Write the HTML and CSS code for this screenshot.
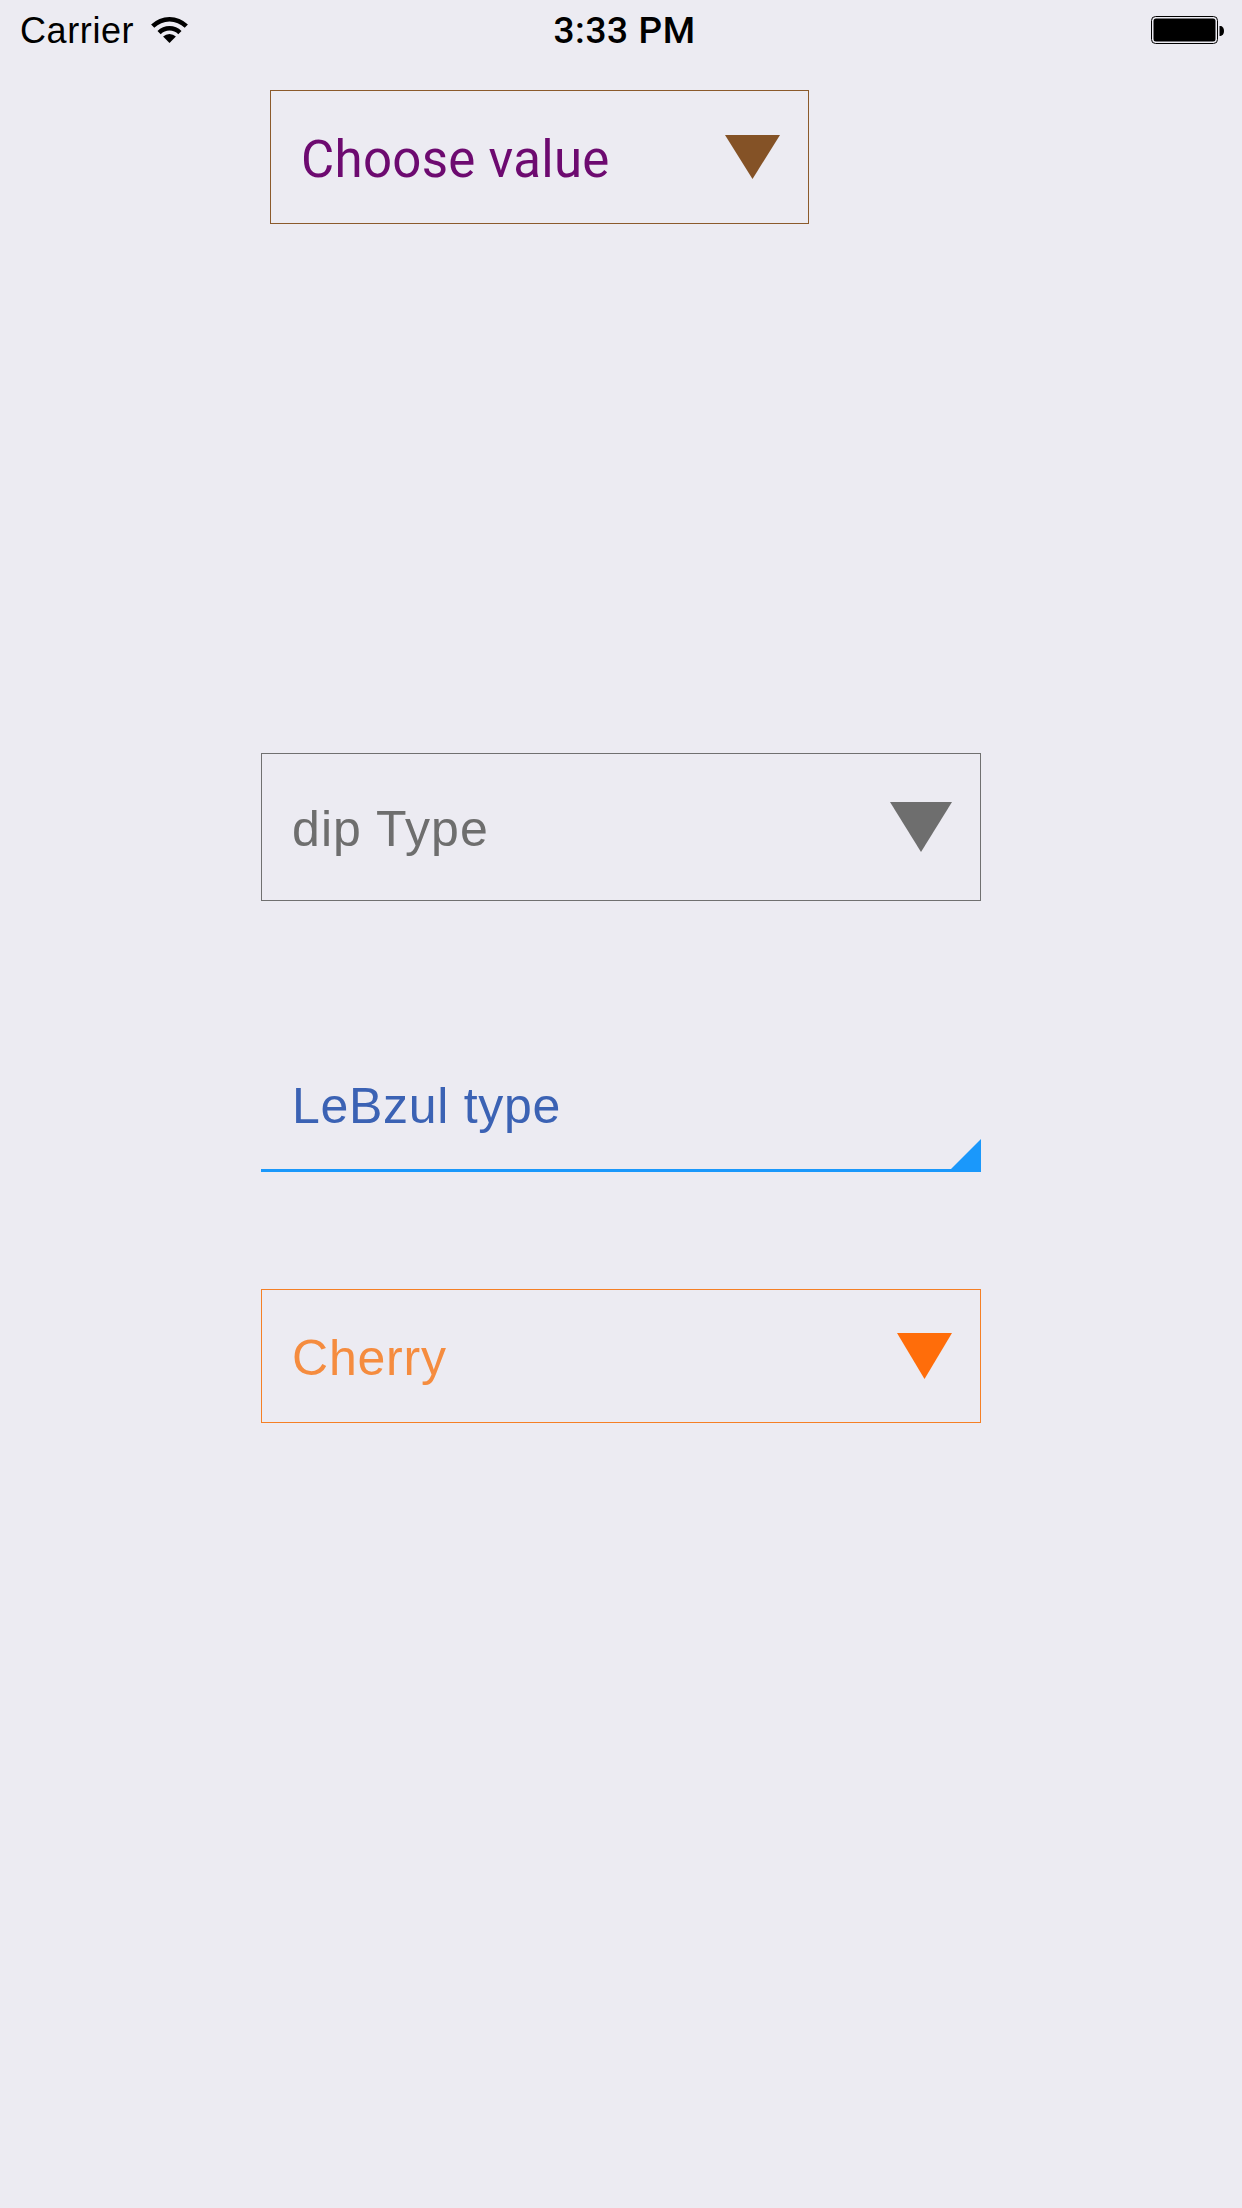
FILE: index.html
```html
<!DOCTYPE html>
<html lang="en">
<head>
<meta charset="utf-8">
<title>Dropdowns</title>
<link rel="stylesheet" href="styles.css">
</head>
<body>
<header class="status">
  <div class="status-left">
    <span class="carrier">Carrier</span>
    <svg class="wifi" width="37" height="28" viewBox="0 0 37 28" aria-hidden="true">
      <path d="M0.1 9.6 A26 26 0 0 1 36.9 9.6 L33.7 12.8 A21.5 21.5 0 0 0 3.3 12.8 Z" fill="#000"/>
      <path d="M6.5 16 A17 17 0 0 1 30.5 16 L27.3 19.2 A12.5 12.5 0 0 0 9.7 19.2 Z" fill="#000"/>
      <path d="M18.5 28 L12.1 21.6 A9 9 0 0 1 24.9 21.6 Z" fill="#000"/>
    </svg>
  </div>
  <div class="time">3:33 PM</div>
  <div class="status-right">
    <svg class="battery" width="74" height="28" viewBox="0 0 74 28" aria-hidden="true">
      <rect x="0.5" y="0.5" width="66" height="27" rx="4" ry="4" fill="none" stroke="#000" stroke-width="1"/>
      <rect x="2.5" y="2.5" width="62" height="23" rx="2.5" ry="2.5" fill="#000"/>
      <path d="M68.5 10 h1 a3.5 5 0 0 1 0 10 h-1 Z" fill="#000"/>
    </svg>
  </div>
</header>

<main class="form">
  <div class="select select-choose">
    <span class="select-label">Choose value</span>
    <svg class="arrow arrow-choose" width="55" height="44" viewBox="0 0 55 44" aria-hidden="true">
      <polygon points="0,0 55,0 27.5,44" fill="#845226"/>
    </svg>
  </div>

  <div class="select select-dip">
    <span class="select-label">dip Type</span>
    <svg class="arrow arrow-dip" width="62" height="50" viewBox="0 0 62 50" aria-hidden="true">
      <polygon points="0,0 62,0 31,50" fill="#6e6e6e"/>
    </svg>
  </div>

  <div class="select select-lebzul">
    <span class="select-label">LeBzul type</span>
    <svg class="corner" width="30" height="30" viewBox="0 0 30 30" aria-hidden="true">
      <polygon points="0,30 30,30 30,0" fill="#1a98fb"/>
    </svg>
  </div>

  <div class="select select-cherry">
    <span class="select-label">Cherry</span>
    <svg class="arrow arrow-cherry" width="55" height="46" viewBox="0 0 55 46" aria-hidden="true">
      <polygon points="0,0 55,0 27.5,46" fill="#ff6d0a"/>
    </svg>
  </div>
</main>
</body>
</html>
```

FILE: styles.css
```css
html {
  background: #ecebf2;
}

body {
  margin: 0;
  min-height: 2208px;
  background: #ecebf2;
  font-family: "Liberation Sans", Arial, sans-serif;
  color: #000;
}

/* Status bar */
.status {
  height: 60px;
  box-sizing: border-box;
  padding: 13px 17px 0 20px;
  display: grid;
  grid-template-columns: 1fr auto 1fr;
  align-items: start;
}

.status-left {
  display: flex;
  align-items: flex-start;
  gap: 17px;
}

.carrier {
  font-size: 36px;
  line-height: 36px;
  letter-spacing: 0.6px;
}

.wifi {
  display: block;
  margin-top: 2px;
}

.time {
  font-family: Roboto, "Liberation Sans", sans-serif;
  font-size: 37px;
  line-height: 36px;
  font-weight: 500;
  letter-spacing: 0.6px;
  padding-left: 4px;
}

.status-right {
  display: flex;
  justify-content: flex-end;
}

.battery {
  display: block;
  margin-top: 3px;
}

/* Form */
.form {
  display: flex;
  flex-direction: column;
  align-items: flex-start;
}

.select {
  box-sizing: border-box;
  display: flex;
  justify-content: space-between;
  align-items: flex-start;
  position: relative;
}

.select-label {
  font-size: 50px;
  line-height: 50px;
  letter-spacing: 0.8px;
  white-space: nowrap;
}

.arrow {
  display: block;
  flex: none;
}

.select-choose {
  margin: 30px 0 0 270px;
  width: 539px;
  height: 134px;
  border: 1px solid #8b5a2b;
  padding: 43px 28px 0 30px;
}

.select-choose .select-label {
  font-family: Roboto, "Liberation Sans", sans-serif;
  font-size: 51px;
  line-height: 51px;
  letter-spacing: 0.3px;
  color: #6d0a70;
}

.arrow-choose {
  margin-top: 1px;
}

.select-dip {
  margin: 529px 0 0 261px;
  width: 720px;
  height: 148px;
  border: 1px solid #707070;
  padding: 50px 28px 0 30px;
}

.select-dip .select-label {
  color: #6e6e6e;
  letter-spacing: 1.1px;
}

.arrow-dip {
  margin-top: -2px;
}

.select-lebzul {
  margin: 123px 0 0 261px;
  width: 720px;
  height: 148px;
  border-bottom: 3px solid #1a98fb;
  padding: 57px 28px 0 31px;
}

.select-lebzul .select-label {
  color: #3b62b4;
  letter-spacing: 0.7px;
}

.corner {
  position: absolute;
  right: 0;
  bottom: 0;
  display: block;
}

.select-cherry {
  margin: 117px 0 0 261px;
  width: 720px;
  height: 134px;
  border: 1px solid #f57f25;
  padding: 43px 28px 0 30px;
}

.select-cherry .select-label {
  color: #f58c3f;
}

.arrow-cherry {
  margin-top: 0;
}
```
